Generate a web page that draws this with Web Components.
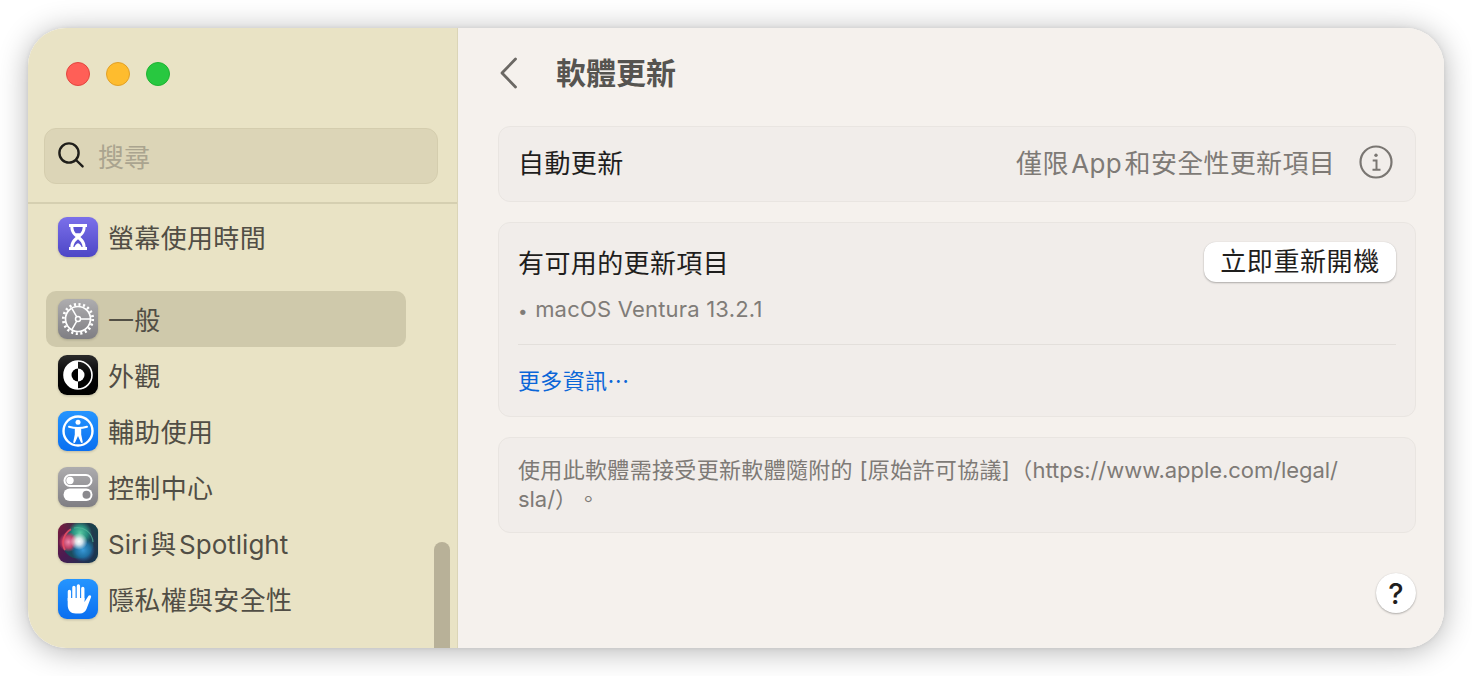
<!DOCTYPE html>
<html lang="zh-Hant">
<head>
<meta charset="utf-8">
<title>軟體更新</title>
<style>
  html, body { margin: 0; height: 100%; background: #fff; overflow: hidden; }
  body { font-family: Inter, "Noto Sans CJK TC", sans-serif; }
</style>
</head>
<body>
<settings-window>
  <settings-sidebar slot="sidebar">
    <nav-item icon="screentime">螢幕使用時間</nav-item>
    <nav-item icon="general" selected style="margin-top:26px">一般</nav-item>
    <nav-item icon="appearance">外觀</nav-item>
    <nav-item icon="access">輔助使用</nav-item>
    <nav-item icon="control">控制中心</nav-item>
    <nav-item icon="siri" style="letter-spacing:0;word-spacing:-4.5px">Siri 與 Spotlight</nav-item>
    <nav-item icon="privacy">隱私權與安全性</nav-item>
  </settings-sidebar>
  <update-pane></update-pane>
</settings-window>

<script>
const FONT = 'Inter, "Noto Sans CJK TC", sans-serif';

class SettingsWindow extends HTMLElement {
    connectedCallback() {
        this.attachShadow({ mode: 'open' });
        this.shadowRoot.innerHTML = `
            <style>
                :host {
                    display: block;
                    box-sizing: border-box;
                    width: 1472px;
                    height: 676px;
                    padding: 28px;
                    font-family: ${FONT};
                    text-spacing-trim: space-all;
                }
                .win {
                    position: relative;
                    display: flex;
                    height: 620px;
                    border-radius: 38px;
                    overflow: hidden;
                    background: #f5f1ed;
                }
                .shadow {
                    position: absolute;
                    left: 28px; top: 28px;
                    width: 1416px; height: 620px;
                    border-radius: 38px;
                    box-shadow: 0 0 4px rgba(0,0,0,.08), 0 3px 30px rgba(0,0,0,.3);
                }
            </style>
            <div class="shadow"></div>
            <div class="win">
                <slot name="sidebar"></slot>
                <slot></slot>
            </div>
        `;
    }
}

class SettingsSidebar extends HTMLElement {
    connectedCallback() {
        this.attachShadow({ mode: 'open' });
        this.shadowRoot.innerHTML = `
            <style>
                :host {
                    display: block;
                    position: relative;
                    flex: none;
                    width: 430px;
                    height: 100%;
                    box-sizing: border-box;
                    background: #e9e3c5;
                    border-right: 1px solid #dbd5b7;
                    padding-top: 34px;
                }
                .lights { display: flex; gap: 16px; padding-left: 38px; }
                .lights i { width: 24px; height: 24px; border-radius: 50%; box-sizing: border-box; border: 1px solid; }
                .r { background: #ff5f57; border-color: #e2463f !important; }
                .y { background: #febc2e; border-color: #e1a027 !important; }
                .g { background: #28c840; border-color: #1fb332 !important; }
                .rule { height: 2px; background: #d5cfb1; margin-top: 18px; }
                .list { padding-top: 5px; }
                .thumb {
                    position: absolute;
                    right: 7px; bottom: 0;
                    width: 16px; height: 106px;
                    background: #b8b198;
                    border-radius: 8px 8px 0 0;
                }
            </style>
            <div class="lights"><i class="r"></i><i class="y"></i><i class="g"></i></div>
            <search-field></search-field>
            <div class="rule"></div>
            <div class="list"><slot></slot></div>
            <div class="thumb"></div>
        `;
    }
}

class SearchField extends HTMLElement {
    connectedCallback() {
        this.attachShadow({ mode: 'open' });
        this.shadowRoot.innerHTML = `
            <style>
                :host {
                    display: flex;
                    align-items: center;
                    box-sizing: border-box;
                    width: 394px;
                    height: 56px;
                    margin: 42px 0 0 16px;
                    padding-left: 12px;
                    padding-bottom: 2px;
                    background: #dcd5b7;
                    border: 1px solid #d4cdae;
                    border-radius: 12px;
                    color: #aaa48f;
                    font-size: 26px;
                }
                svg { width: 28px; height: 28px; margin-right: 13px; flex: none; }
            </style>
            <svg viewBox="0 0 28 28" fill="none" stroke="#1f1e1a" stroke-width="2.400" stroke-linecap="round">
                <circle cx="12" cy="12" r="9.600"/><path d="M19 19l6.600 6.400"/>
            </svg>
            <span>搜尋</span>
        `;
    }
}

const ICON_DEFS = {
    screentime: `
        <defs><linearGradient id="bg" x1="0" y1="0" x2="0" y2="1"><stop offset="0" stop-color="#7b70ea"/><stop offset="1" stop-color="#4d46c6"/></linearGradient></defs>
        <rect width="40" height="40" rx="9" fill="url(#bg)"/>
        <path d="M11 7h18v3h-1.400c0 4.800-2.200 7.400-5.200 10 3 2.600 5.200 5.200 5.200 10H29v3H11v-3h1.400c0-4.800 2.200-7.400 5.200-10-3-2.600-5.200-5.200-5.200-10H11z" fill="#fff"/>
        <path d="M15.300 10h9.400c-.2 3-1.100 4.800-2.400 6.200h-4.600c-1.300-1.400-2.200-3.200-2.400-6.200zM20 22.200c-2.300 1.700-4.200 4-4.700 7.800h9.400c-.5-3.800-2.400-6.100-4.700-7.800z" fill="#5c54d2"/>
        <path d="M16.400 30c.6-2 1.900-3.100 3.600-3.800 1.700.7 3 1.800 3.600 3.800z" fill="#fff"/>`,
    general: `
        <defs><linearGradient id="bg" x1="0" y1="0" x2="0" y2="1"><stop offset="0" stop-color="#aeadaf"/><stop offset="1" stop-color="#7f7e83"/></linearGradient></defs>
        <rect width="40" height="40" rx="9" fill="url(#bg)"/>
        <circle cx="20" cy="20" r="14.700" fill="none" stroke="#fff" stroke-width="2.800" stroke-dasharray="2.100 2.520"/>
        <circle cx="20" cy="20" r="12.500" fill="none" stroke="#fff" stroke-width="1.700"/>
        <g stroke="#fff" stroke-width="1.500" fill="none">
            <path d="M22.500 20H32M18.750 17.830L14 9.600M18.750 22.170L14 30.400"/>
            <circle cx="20" cy="20" r="2.500"/>
        </g>`,
    appearance: `
        <defs><linearGradient id="bg" x1="0" y1="0" x2="0" y2="1"><stop offset="0" stop-color="#2b2b2b"/><stop offset=".5" stop-color="#050505"/><stop offset="1" stop-color="#000"/></linearGradient></defs>
        <rect width="40" height="40" rx="9" fill="url(#bg)"/>
        <circle cx="20" cy="20" r="14" fill="none" stroke="#fff" stroke-width="1.600"/>
        <path d="M20 6a14 14 0 0 0 0 28z" fill="#fff"/>
        <path d="M20 13.500a6.500 6.500 0 0 0 0 13z" fill="#000"/>
        <path d="M20 13.500a6.500 6.500 0 0 1 0 13z" fill="#fff"/>`,
    access: `
        <defs><linearGradient id="bg" x1="0" y1="0" x2="0" y2="1"><stop offset="0" stop-color="#2595ff"/><stop offset="1" stop-color="#0a6ff0"/></linearGradient></defs>
        <rect width="40" height="40" rx="9" fill="url(#bg)"/>
        <circle cx="20" cy="20" r="14.500" fill="none" stroke="#fff" stroke-width="2.400"/>
        <circle cx="20" cy="11.300" r="2.500" fill="#fff"/>
        <path d="M11 15.800c3 .9 6 1.300 9 1.300s6-.4 9-1.300" fill="none" stroke="#fff" stroke-width="2" stroke-linecap="round"/>
        <path d="M16.800 17h6.400v6.400l1.500 7.400c.2 1.300-1.500 1.700-1.900.5L20 25l-2.800 6.300c-.4 1.200-2.100.8-1.900-.5l1.500-7.400z" fill="#fff"/>`,
    control: `
        <defs><linearGradient id="bg" x1="0" y1="0" x2="0" y2="1"><stop offset="0" stop-color="#adacae"/><stop offset="1" stop-color="#7f7e83"/></linearGradient></defs>
        <rect width="40" height="40" rx="9" fill="url(#bg)"/>
        <rect x="6.500" y="8" width="27" height="11" rx="5.500" fill="none" stroke="#fff" stroke-width="2"/>
        <circle cx="12" cy="13.500" r="3.700" fill="#fff"/>
        <rect x="5.500" y="21.500" width="29" height="12.500" rx="6.250" fill="#fff"/>
        <circle cx="28.500" cy="27.750" r="4" fill="#8a898d"/>`,
    siri: `
        <defs>
            <linearGradient id="bg" x1="0" y1="0" x2="1" y2="1"><stop offset="0" stop-color="#7a1c3c"/><stop offset=".5" stop-color="#4a1a52"/><stop offset="1" stop-color="#0d3c50"/></linearGradient>
            <linearGradient id="bg2" x1="1" y1="0" x2="0" y2="1"><stop offset="0" stop-color="#0c4a4a"/><stop offset=".5" stop-color="#0c4a4a" stop-opacity="0"/></linearGradient>
            <radialGradient id="w"><stop offset="0" stop-color="#fff"/><stop offset=".4" stop-color="#fff" stop-opacity=".8"/><stop offset="1" stop-color="#fff" stop-opacity="0"/></radialGradient>
            <radialGradient id="p"><stop offset="0" stop-color="#f08aae"/><stop offset=".6" stop-color="#d8406a" stop-opacity=".85"/><stop offset="1" stop-color="#d8406a" stop-opacity="0"/></radialGradient>
            <radialGradient id="t"><stop offset="0" stop-color="#5ccda4"/><stop offset=".6" stop-color="#2a9d87" stop-opacity=".85"/><stop offset="1" stop-color="#2a9d87" stop-opacity="0"/></radialGradient>
            <radialGradient id="b"><stop offset="0" stop-color="#3a9ad8"/><stop offset=".6" stop-color="#1f76ae" stop-opacity=".85"/><stop offset="1" stop-color="#1a6aa0" stop-opacity="0"/></radialGradient>
        </defs>
        <rect width="40" height="40" rx="9" fill="url(#bg)"/>
        <rect width="40" height="40" rx="9" fill="url(#bg2)"/>
        <circle cx="20" cy="20" r="15.500" fill="#1c4a5c"/>
        <circle cx="22" cy="10" r="12" fill="url(#t)"/>
        <circle cx="10.500" cy="19" r="10" fill="url(#p)"/>
        <circle cx="25" cy="27" r="12" fill="url(#b)"/>
        <circle cx="21" cy="18.500" r="8.500" fill="url(#w)"/>
        <path d="M7 27A15.500 15.500 0 0 1 13 6.200" fill="none" stroke="#e84b62" stroke-width="1.800" opacity=".9"/>
        <path d="M16 5A15.500 15.500 0 0 1 35 19" fill="none" stroke="#57b89a" stroke-width="1.200" opacity=".7"/>`,
    privacy: `
        <defs><linearGradient id="bg" x1="0" y1="0" x2="0" y2="1"><stop offset="0" stop-color="#2595ff"/><stop offset="1" stop-color="#0a6ff0"/></linearGradient></defs>
        <rect width="40" height="40" rx="9" fill="url(#bg)"/>
        <path d="M11.400 21.500V12.500M15.900 20V8.500M20.400 20V7M24.800 20.500V9.500" fill="none" stroke="#fff" stroke-width="3.300" stroke-linecap="round"/>
        <path d="M9.700 19h16.800v4l4-6.200c1-1.400 3.300-.4 2.500 1.400L28.500 30c-1.300 2.900-3.400 4.500-6.500 4.500h-4.300c-5 0-8-3.400-8-8.500z" fill="#fff"/>`
};

class NavItem extends HTMLElement {
    connectedCallback() {
        this.attachShadow({ mode: 'open' });
        const icon = ICON_DEFS[this.getAttribute('icon')] || '';
        this.shadowRoot.innerHTML = `
            <style>
                :host {
                    display: flex;
                    align-items: center;
                    box-sizing: border-box;
                    width: 360px;
                    height: 56px;
                    margin-left: 18px;
                    padding-left: 12px;
                    border-radius: 10px;
                    color: #514e45;
                    font-size: 26px;
                    letter-spacing: .33px;
                    white-space: nowrap;
                }
                :host([selected]) { background: #cfc9ab; }
                svg {
                    width: 40px; height: 40px;
                    margin-right: 10px;
                    flex: none;
                    filter: drop-shadow(0 1px 1px rgba(0,0,0,.18));
                }
                span { position: relative; top: -1px; }
            </style>
            <svg viewBox="0 0 40 40">${icon}</svg>
            <span><slot></slot></span>
        `;
    }
}

class SettingsCard extends HTMLElement {
    connectedCallback() {
        this.attachShadow({ mode: 'open' });
        this.shadowRoot.innerHTML = `
            <style>
                :host {
                    display: block;
                    box-sizing: border-box;
                    background: #f1edea;
                    border: 1px solid #e9e5e1;
                    border-radius: 12px;
                    padding: 0 19px;
                }
            </style>
            <slot></slot>
        `;
    }
}

class PushButton extends HTMLElement {
    connectedCallback() {
        this.attachShadow({ mode: 'open' });
        this.shadowRoot.innerHTML = `
            <style>
                :host {
                    display: inline-flex;
                    align-items: center;
                    justify-content: center;
                    box-sizing: border-box;
                    height: 40px;
                    width: 192px;
                    padding-bottom: 5px;
                    background: #fff;
                    border-radius: 12px;
                    box-shadow: 0 1px 2px rgba(0,0,0,.28), 0 0 1px rgba(0,0,0,.12);
                    color: #1f1e1d;
                    font-size: 26px;
                    letter-spacing: .6px;
                    white-space: nowrap;
                }
            </style>
            <slot></slot>
        `;
    }
}

class HelpButton extends HTMLElement {
    connectedCallback() {
        this.attachShadow({ mode: 'open' });
        this.shadowRoot.innerHTML = `
            <style>
                :host {
                    position: absolute;
                    right: 28px; bottom: 35px;
                    display: flex;
                    align-items: center;
                    justify-content: center;
                    width: 40px; height: 40px;
                    background: #fff;
                    border-radius: 50%;
                    box-shadow: 0 1px 2px rgba(0,0,0,.28), 0 0 1px rgba(0,0,0,.12);
                    color: #1f1e1d;
                    font-size: 29px;
                    font-weight: 500;
                }
            </style>
            ?
        `;
    }
}

class UpdatePane extends HTMLElement {
    connectedCallback() {
        this.attachShadow({ mode: 'open' });
        this.shadowRoot.innerHTML = `
            <style>
                :host {
                    display: block;
                    position: relative;
                    flex: 1;
                    box-sizing: border-box;
                    padding: 0 28px 0 40px;
                    background: #f5f1ed;
                    color: #1f1e1d;
                    font-size: 26px;
                    letter-spacing: .38px;
                }
                header { display: flex; align-items: center; height: 90px; margin-bottom: 8px; }
                header svg { width: 24px; height: 34px; margin-right: 34px; flex: none; }
                h1 { margin: 0 0 4px; font-size: 30px; font-weight: 700; color: #565450; letter-spacing: 0; }
                .stack { display: flex; flex-direction: column; gap: 20px; }
                .row { display: flex; align-items: center; }
                .auto { height: 74px; }
                .auto > span { position: relative; top: -3px; }
                .val { margin-left: auto; color: #7e7a76; letter-spacing: .3px; word-spacing: -5px; }
                .auto svg { width: 34px; height: 34px; margin-left: 24px; margin-right: 3px; flex: none; position: relative; top: -2px; }
                .avail { height: 40px; margin-top: 19px; justify-content: space-between; }
                .avail > span { position: relative; top: -1px; }
                .item { margin-top: 10px; height: 34px; line-height: 34px; font-size: 22px; color: #807c78; letter-spacing: .2px; }
                .item b { font-weight: 400; font-size: 17px; margin-right: 1px; }
                hr { border: 0; height: 1px; background: #e3dfdb; margin: 18px 0 0; }
                .more { display: block; height: 71px; line-height: 73px; font-size: 22px; letter-spacing: .33px; color: #0b66d8; text-decoration: none; }
                .note { margin: 0; padding: 18px 0 15px; font-size: 22px; line-height: 29px; color: #7e7a76; height: 94px; box-sizing: border-box; letter-spacing: .33px; }
                .note span { letter-spacing: -.05px; }
            </style>
            <header>
                <svg viewBox="0 0 24 34" fill="none" stroke="#6b6864" stroke-width="2.800" stroke-linecap="round" stroke-linejoin="round">
                    <path d="M17.500 3L4 17l13.500 14"/>
                </svg>
                <h1>軟體更新</h1>
            </header>
            <div class="stack">
                <settings-card>
                    <div class="row auto">
                        <span>自動更新</span>
                        <span class="val">僅限 App 和安全性更新項目</span>
                        <svg viewBox="0 0 34 34" fill="none" stroke="#7a7672" stroke-width="2.200">
                            <circle cx="17" cy="17" r="15.500"/>
                            <circle cx="17" cy="10.300" r="1.700" fill="#7a7672" stroke="none"/>
                            <path d="M13.700 15.500H17.500V24.500M13.500 24.800h8" stroke-width="2"/>
                        </svg>
                    </div>
                </settings-card>
                <settings-card>
                    <div class="row avail">
                        <span>有可用的更新項目</span>
                        <push-button>立即重新開機</push-button>
                    </div>
                    <div class="item"><b>•</b> macOS Ventura 13.2.1</div>
                    <hr>
                    <a class="more" href="#">更多資訊⋯</a>
                </settings-card>
                <settings-card>
                    <p class="note">使用此軟體需接受更新軟體隨附的 [原始許可協議]（<span>https://www.apple.com/legal/<br>sla/</span>）。</p>
                </settings-card>
            </div>
            <help-button></help-button>
        `;
    }
}

customElements.define('nav-item', NavItem);
customElements.define('search-field', SearchField);
customElements.define('settings-sidebar', SettingsSidebar);
customElements.define('settings-card', SettingsCard);
customElements.define('push-button', PushButton);
customElements.define('help-button', HelpButton);
customElements.define('update-pane', UpdatePane);
customElements.define('settings-window', SettingsWindow);
</script>
</body>
</html>
